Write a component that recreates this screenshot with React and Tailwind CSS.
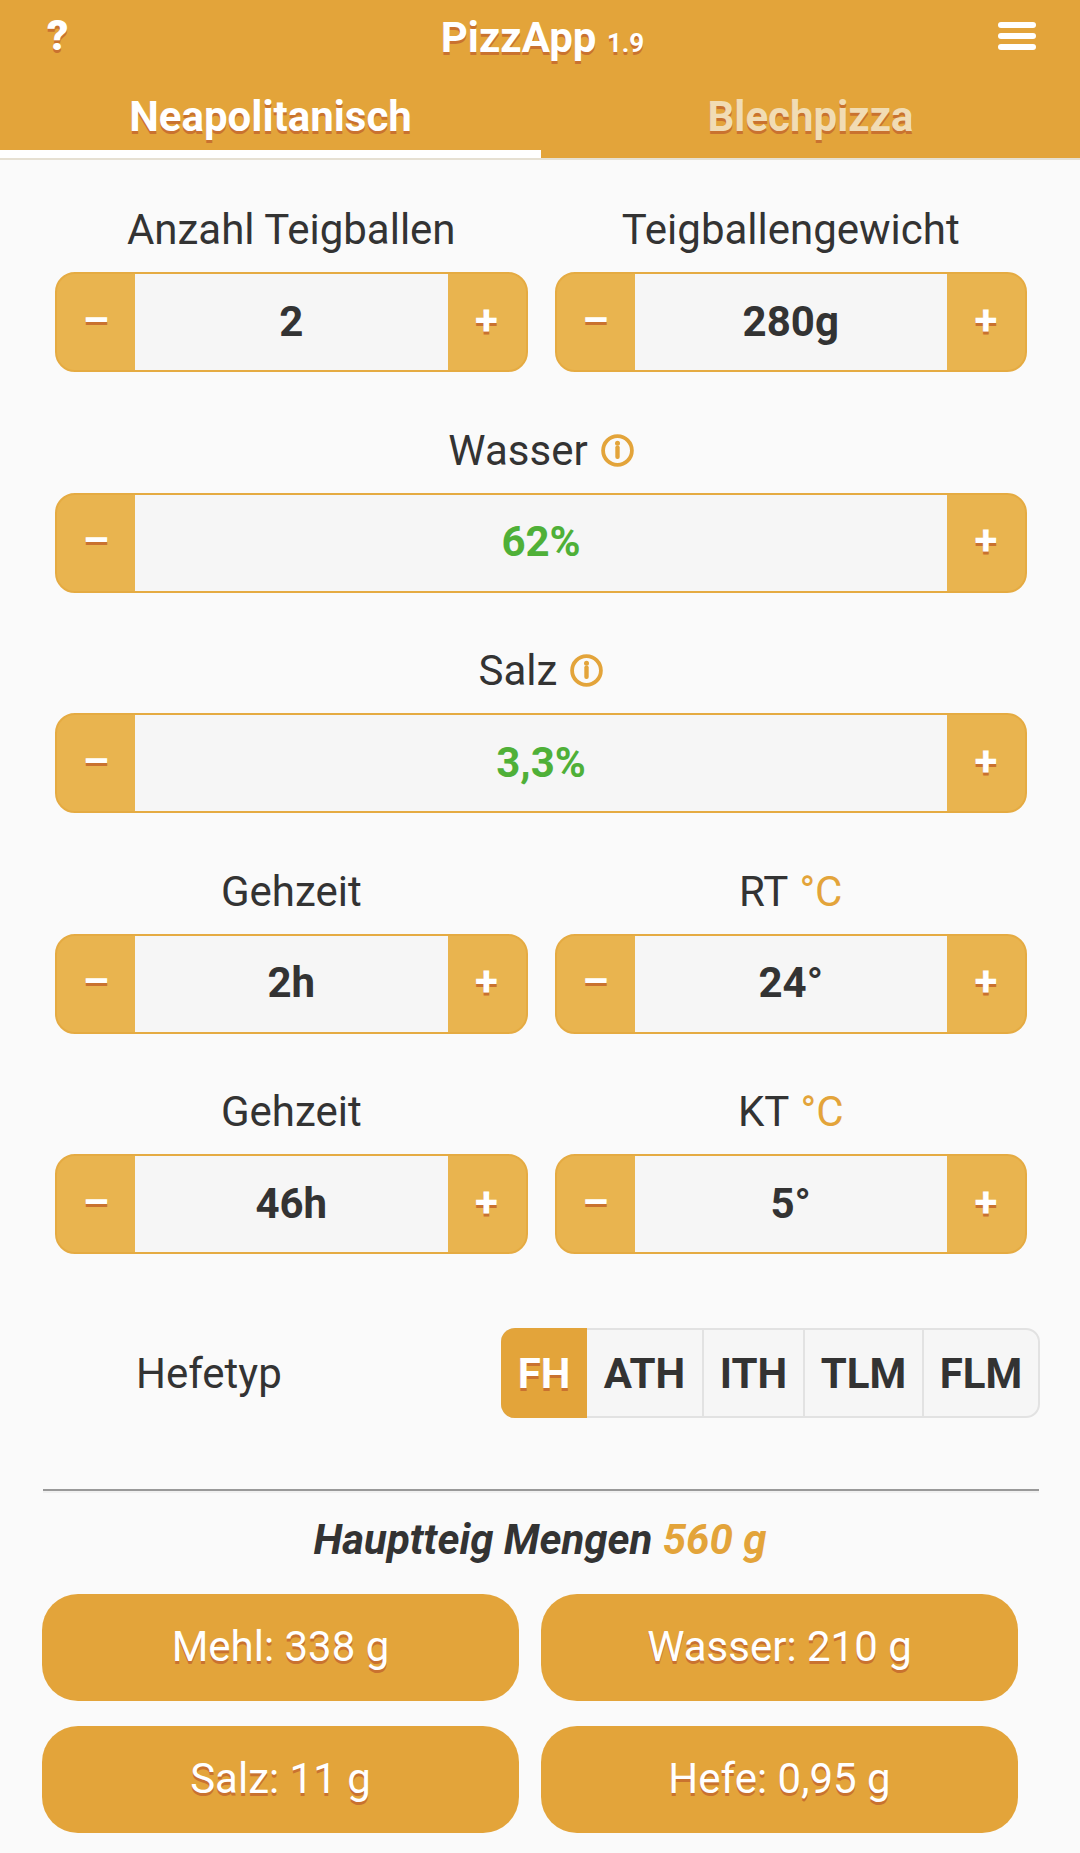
const shadow = "[text-shadow:0_3px_0_#c9722f]";

function InfoIcon() {
  return (
    <svg width="33" height="33" viewBox="0 0 33 33" className="ml-[13px]" aria-hidden="true">
      <circle cx="16.5" cy="16.5" r="14.4" fill="none" stroke="#e3a43a" strokeWidth="3.8" />
      <circle cx="16.5" cy="9.3" r="2.5" fill="#e3a43a" />
      <rect x="14.3" y="11.5" width="4.4" height="13.5" rx="2" fill="#e3a43a" />
    </svg>
  );
}

function Stepper({ label, value, unit, info, green }) {
  return (
    <div className="flex-1 min-w-0">
      <div className="h-[68px] pt-[1px] flex items-start justify-center text-[42px] leading-[49px] text-[#333]">
        <span>{label}</span>
        {unit && <span className="ml-[11px] text-[#e3a43a]">{unit}</span>}
        {info && <span className="h-[49px] flex items-center"><InfoIcon /></span>}
      </div>
      <div className="flex h-[100px] rounded-[20px] overflow-hidden bg-[#e9b44f] border-2 border-[#e5ab42]">
        <div className={`w-[78px] pb-[4px] flex items-center justify-center text-white font-bold text-[42px] ${shadow}`}>–</div>
        <div className={`flex-1 pb-[2px] flex items-center justify-center bg-[#f6f6f6] text-[42px] font-bold ${green ? "text-[#4fb038]" : "text-[#333]"}`}>
          {value}
        </div>
        <div className={`w-[78px] pb-[4px] flex items-center justify-center text-white font-bold text-[42px] ${shadow}`}>+</div>
      </div>
    </div>
  );
}

function Result({ children }) {
  return (
    <div className={`w-[477px] h-[107px] pb-[2px] rounded-[36px] bg-[#e3a43a] flex items-center justify-center text-white text-[42px] ${shadow}`}>
      {children}
    </div>
  );
}

export default function App() {
  return (
    <div className="w-[1080px] h-[1853px] overflow-hidden bg-[#fafafa] font-['Roboto',sans-serif]">
      <header className="h-[160px] bg-[#e3a43a] border-b-2 border-[#e6e0d2]">
        <div className="h-[75px] flex items-center justify-between pl-[47px] pr-[44px] text-white">
          <span className={`text-[42px] font-black leading-none w-[40px] -mt-[3px] ${shadow}`}>?</span>
          <span className={`font-bold text-[42px] leading-none ${shadow}`}>
            PizzApp <span className="text-[26px] font-bold">1.9</span>
          </span>
          <svg width="38" height="30" viewBox="0 0 38 30" className="-mt-[4px]" aria-hidden="true">
            <rect x="0" y="1" width="38" height="6" rx="3" fill="#fff" />
            <rect x="0" y="12" width="38" height="6" rx="3" fill="#fff" />
            <rect x="0" y="23" width="38" height="6" rx="3" fill="#fff" />
          </svg>
        </div>
        <div className="flex h-[83px]">
          <div className={`w-[541px] pt-[8px] border-b-[8px] border-white flex items-center justify-center text-white font-bold text-[42px] ${shadow}`}>
            Neapolitanisch
          </div>
          <div className={`flex-1 pt-[8px] pb-[8px] flex items-center justify-center text-[#f1dcb4] font-bold text-[42px] ${shadow}`}>
            Blechpizza
          </div>
        </div>
      </header>

      <main className="pt-[44px] pl-[55px] pr-[53px] flex flex-col gap-[52.6px]">
        <div className="flex gap-[27px]">
          <Stepper label="Anzahl Teigballen" value="2" />
          <Stepper label="Teigballengewicht" value="280g" />
        </div>
        <Stepper label="Wasser" value="62%" info green />
        <Stepper label="Salz" value="3,3%" info green />
        <div className="flex gap-[27px]">
          <Stepper label="Gehzeit" value="2h" />
          <Stepper label="RT" unit="°C" value="24°" />
        </div>
        <div className="flex gap-[27px]">
          <Stepper label="Gehzeit" value="46h" />
          <Stepper label="KT" unit="°C" value="5°" />
        </div>
      </main>

      <section className="mt-[74px] flex items-center pl-[136px] pr-[40px] justify-between">
        <span className="text-[42px] text-[#333]">Hefetyp</span>
        <div className="flex h-[90px] w-[539px] rounded-[14px] border-2 border-[#e2e2e2] bg-[#f6f6f6] text-[42px] font-bold text-[#333] box-border">
          <div className={`w-[86px] -my-[2px] -ml-[2px] rounded-l-[14px] bg-[#e3a43a] text-white flex items-center justify-center ${shadow}`}>FH</div>
          <div className="w-[117px] border-r-2 border-[#e2e2e2] flex items-center justify-center">ATH</div>
          <div className="w-[101px] border-r-2 border-[#e2e2e2] flex items-center justify-center">ITH</div>
          <div className="w-[119px] border-r-2 border-[#e2e2e2] flex items-center justify-center">TLM</div>
          <div className="flex-1 flex items-center justify-center">FLM</div>
        </div>
      </section>

      <hr className="mt-[71px] ml-[43px] w-[996px] border-0 border-t-2 border-[#999] h-[4px] bg-[#f0f0f0]" />

      <div className="mt-[22px] text-center text-[42px] leading-[49px] font-bold italic text-[#333]">
        Hauptteig Mengen <span className="text-[#e3a43a]">560 g</span>
      </div>

      <div className="mt-[30px] pl-[42px] grid grid-cols-[477px_477px] gap-x-[22px] gap-y-[25px]">
        <Result>Mehl: 338 g</Result>
        <Result>Wasser: 210 g</Result>
        <Result>Salz: 11 g</Result>
        <Result>Hefe: 0,95 g</Result>
      </div>
    </div>
  );
}
